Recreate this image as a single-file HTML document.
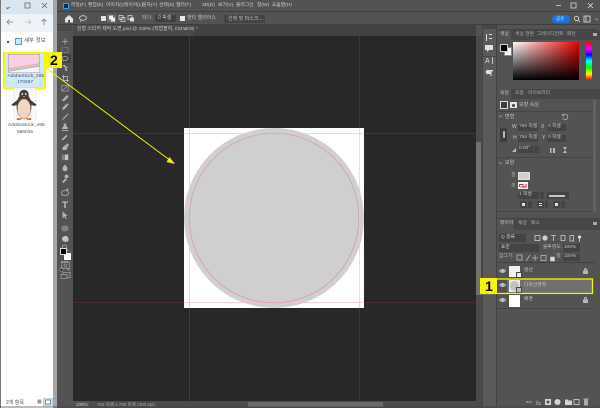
<!DOCTYPE html>
<html lang="ko"><head><meta charset="utf-8"><title>Photoshop</title>
<style>
html,body{margin:0;padding:0;background:#9a9a9a}
#w{position:relative;width:600px;height:408px;overflow:hidden;background:#a6a6a6;font-family:"Liberation Sans","Noto Sans CJK KR",sans-serif;filter:blur(.3px)}
#w div,#w span,#w svg{position:absolute}
#w span{white-space:nowrap;line-height:1}
.m{font-size:4.800px;color:#d0d0d0;top:4px}
.t{font-size:5px;color:#c6c6c6}
.d{font-size:5px;color:#c0c0c0}
.b{background:#444}
.e{font-size:5px;color:#4a5560}
</style></head><body><div id="w">

<!-- Explorer -->
<div style="left:0;top:0;width:53px;height:408px;background:#fff"></div>
<div style="left:0;top:0;width:53px;height:14px;background:#d9e5ef"></div>
<div style="left:0;top:14px;width:53px;height:18px;background:#eef3f8"></div>
<div style="left:0;top:0;width:1px;height:408px;background:#777"></div>
<svg style="left:0;top:0" width="53" height="32" viewBox="0 0 53 32" fill="none" stroke="#667" stroke-width=".8">
<path d="M7 9l3-2M7 9v-2"/><rect x="25" y="3" width="5" height="5"/><path d="M42 3l5 5M47 3l-5 5"/>
<path d="M7 22h6M7 22l2.500-2.500M7 22l2.500 2.500" stroke="#778"/><path d="M25 22h6M31 22l-2.500-2.500M31 22l-2.500 2.500" stroke="#bbb"/><path d="M44 25v-6M44 19l-2.500 2.500M44 19l2.500 2.500" stroke="#778"/>
</svg>
<div style="left:7px;top:41px;width:1.500px;height:1.500px;background:#555"></div>
<svg style="left:15px;top:38px" width="7" height="7"><rect x=".5" y=".5" width="6" height="6" fill="#cfe6f7" stroke="#2e86c8" stroke-width=".8"/></svg>
<span class="e" style="left:24px;top:39px;font-size:5.500px">세부 정보</span>

<div style="left:3px;top:52px;width:39px;height:33px;background:#cde7fb;border:2px solid #f7f500"></div>
<svg style="left:8px;top:54px" width="32" height="19" viewBox="0 0 32 19">
<rect x=".3" y=".3" width="31.400" height="18.400" fill="#f8cfe3" stroke="#999" stroke-width=".5"/>
<path d="M.5 18.500V17.500L31.500 12.500V18.500Z" fill="#fdf1f6"/>
<path d="M.5 14.200L31.500 9.200V10.200L.5 15.200Z" fill="#f29ab8"/>
<path d="M.5 15.200L31.500 10.200V11L.5 16Z" fill="#f5e06a"/>
<path d="M.5 16L31.500 11V11.800L.5 16.800Z" fill="#89cfa0"/>
<path d="M.5 16.800L31.500 11.800V12.600L.5 17.600Z" fill="#8fc3ec"/>
</svg>
<span class="e" style="left:7.500px;top:74.500px;font-size:4.800px">AdobeStock_285</span>
<span class="e" style="left:17px;top:81px;font-size:4.800px">170487</span>

<svg style="left:9px;top:88px" width="30" height="34" viewBox="0 0 30 34">
<rect x="5" y="0" width="22" height="32" fill="#fbfbfb" stroke="#ddd" stroke-width=".4"/>
<path d="M2 17C6 14 8 12 10 11L9 16 5 18ZM28 17C24 14 22 12 20 11L21 16 25 18Z" fill="#4a3d38"/>
<ellipse cx="15" cy="18" rx="7.500" ry="12.500" fill="#4a3d38"/>
<ellipse cx="15" cy="20.500" rx="6.500" ry="9.500" fill="#f3d5c4"/>
<circle cx="15" cy="6.500" r="4.800" fill="#4a3d38"/>
<circle cx="13.200" cy="6" r=".9" fill="#fff"/><circle cx="16.800" cy="6" r=".9" fill="#fff"/>
<path d="M13.800 8h2.400l-1.200 1.500z" fill="#e8853a"/>
<path d="M8 30h5l-1.500 2H7.500ZM17 30h5l.5 2H18.500Z" fill="#e8742e"/>
</svg>
<span class="e" style="left:8px;top:124px;font-size:4.800px">AdobeStock_495</span>
<span class="e" style="left:17px;top:130.500px;font-size:4.800px">586035</span>

<span class="e" style="left:6px;top:401px;font-size:5px">2개 항목</span>
<svg style="left:36px;top:398px" width="17" height="10"><rect x="1.500" y="1.500" width="4" height="4" fill="#9a9a9a"/><rect x="7.500" y="0" width="9" height="8" fill="#cfe6f7" stroke="#7fb6dc" stroke-width=".6"/><rect x="9.500" y="2" width="5" height="4" fill="#fff" stroke="#444" stroke-width=".6"/></svg>

<!-- PS frame -->
<div style="left:57px;top:0;width:543px;height:408px;background:#535353"></div>
<div style="left:57px;top:11px;width:543px;height:1px;background:#3f3f3f"></div>
<div style="left:57px;top:24px;width:543px;height:1px;background:#3e3e3e"></div>
<div style="left:63px;top:3px;width:6px;height:6px;background:#0c2b47;border:.5px solid #3aa0ea;box-sizing:border-box"></div>
<span class="m" style="left:71px">파일(F)</span><span class="m" style="left:88px">편집(E)</span><span class="m" style="left:106px">이미지(I)</span><span class="m" style="left:124px">레이어(L)</span><span class="m" style="left:142px">문자(Y)</span><span class="m" style="left:159px">선택(S)</span><span class="m" style="left:176px">필터(T)</span><span class="m" style="left:202px">3D(D)</span><span class="m" style="left:218px">보기(V)</span><span class="m" style="left:236px">플러그인</span><span class="m" style="left:257px">창(W)</span><span class="m" style="left:272px">도움말(H)</span>
<svg style="left:550px;top:0" width="50" height="11" fill="none" stroke="#d8d8d8" stroke-width=".8"><path d="M6 5.500h5"/><rect x="21" y="3" width="5" height="5"/><path d="M38 3l5 5M43 3l-5 5"/></svg>

<!-- options bar -->
<svg style="left:64px;top:13px" width="112" height="11" viewBox="0 0 112 11">
<path d="M1 5.500L5 2l4 3.500V9.500H6V7H4v2.500H1Z" fill="#e6e6e6"/>
<ellipse cx="19" cy="5" rx="3.500" ry="2.300" fill="none" stroke="#cfcfcf" stroke-width=".8"/><path d="M17 7l-.5 2" stroke="#cfcfcf" stroke-width=".7"/>
<path d="M13 1v9M33 1v9" stroke="#444" stroke-width=".6"/>
<rect x="37" y="3" width="5" height="5" fill="#e2e2e2"/>
<rect x="43" y="1.200" width="9" height="8.500" fill="#6a6a6a" rx=".5"/><rect x="45" y="2.500" width="4" height="4" fill="#eee"/><rect x="47" y="4.500" width="4" height="4" fill="#eee"/>
<rect x="55" y="2.500" width="4" height="4" fill="none" stroke="#ddd" stroke-width=".7"/><rect x="57" y="4.500" width="4" height="4" fill="none" stroke="#ddd" stroke-width=".7"/>
<rect x="64" y="2.500" width="4" height="4" fill="none" stroke="#ddd" stroke-width=".7"/><rect x="66" y="4.500" width="4" height="4" fill="#ddd"/>
</svg>
<span class="d" style="left:142px;top:16px;color:#aaa">페더:</span>
<div class="b" style="left:155px;top:15px;width:21px;height:7px;background:#3f3f3f"></div>
<span class="d" style="left:158px;top:16px">0 픽셀</span>
<div style="left:180px;top:16px;width:5px;height:5px;background:#e8e8e8"></div>
<span class="d" style="left:187px;top:16px">앤티 앨리어스</span>
<div style="left:224px;top:15px;width:41px;height:8px;background:#444"></div>
<span class="d" style="left:228px;top:16.500px">선택 및 마스크...</span>
<div style="left:552px;top:15px;width:18px;height:8px;border-radius:4px;background:#1b73e0"></div>
<span class="d" style="left:556px;top:16.500px;color:#e8f0ff;font-size:4.500px">공유</span>
<svg style="left:573px;top:14px" width="27" height="10" fill="none" stroke="#dcdcdc" stroke-width=".8"><circle cx="3.500" cy="4.500" r="2.200"/><path d="M5 6l2 2"/><rect x="11" y="2" width="6" height="6"/><path d="M13 2v6"/><path d="M22 4.500l1.500 1.500 1.500-1.500" stroke="#999"/></svg>

<!-- tabs -->
<div style="left:73px;top:25px;width:403px;height:11px;background:#424242"></div>
<div style="left:73px;top:25px;width:120px;height:11px;background:#4a4a4a"></div>
<span class="t" style="left:77px;top:28px;font-size:4.900px">원형 스티커 제작 도면.psd @ 100% (직접펼쳐, CMYK/8) *</span>
<span class="t" style="left:184px;top:28px">×</span>

<!-- toolbar -->
<div style="left:57px;top:25px;width:16px;height:383px;background:#535353"></div>
<div style="left:58px;top:25px;width:14px;height:6px;background:#4a4a4a"></div>
<div style="left:60px;top:54px;width:11px;height:9px;background:#424242"></div>
<svg style="left:57px;top:36px;opacity:.82" width="16" height="250" viewBox="0 0 16 250" fill="#c9c9c9" stroke="none">
<path d="M8 2.500v6M5 5.500h6" stroke="#c9c9c9" stroke-width=".8"/>
<rect x="5" y="11.500" width="6" height="5" fill="none" stroke="#c9c9c9" stroke-width=".6" stroke-dasharray="1.200 .8"/>
<ellipse cx="8" cy="22.500" rx="3" ry="2" fill="none" stroke="#c9c9c9" stroke-width=".7"/><path d="M6.300 24.300l-.5 1.200" stroke="#c9c9c9" stroke-width=".6"/>
<path d="M5.500 29.500l3 2.500-.7 1.500 1.700 1.700.8-.8-.8-2.500 1.500-.8-2.500-.8-.8-1.500Z"/>
<path d="M6.500 39v5.500h5.500M5 40.500h5.500V46" fill="none" stroke="#d5d5d5" stroke-width=".8"/>
<rect x="4.800" y="49.500" width="6.400" height="5.500" fill="none" stroke="#bbb" stroke-width=".7"/><path d="M5.500 54.500l5-4.500" stroke="#bbb" stroke-width=".6"/>
<path d="M5 65l.8-1.700 3.200-3.300 1.700 1.700-3.300 3.200Z"/><circle cx="10" cy="60.500" r="1.300"/>
<path d="M5 74l.8-2.500 3.200-3.300 1.700 1.700-3.300 3.300Z"/><path d="M9.300 68l1.200-.8 1.200 1.200-.8 1.200Z"/>
<path d="M5 84l.8-1.500 4.800-4.800.8.8-4.800 4.800Z"/>
<path d="M6.800 87.500h2.400v2.500l1.700 1.700v1.300H5.100v-1.300l1.700-1.700Z"/><rect x="4.800" y="94" width="6.400" height=".9"/>
<path d="M4.500 104.500l.8-1.700 4-4 1.200 1.200-4 4Z"/>
<path d="M5 112.500l2.500-3.200 3.200 2.400-1.700 2.300H6Z"/><rect x="9" y="107.500" width="2.400" height="3.200" transform="rotate(35 10 109)"/>
<rect x="4.800" y="118.500" width="6.400" height="5.600" fill="#8a8a8a"/><rect x="8" y="118.500" width="3.200" height="5.600" fill="#e0e0e0"/>
<path d="M8 128.500c1.700 1.700 2.500 3 2.500 4.300a2.500 2.500 0 1 1-5 0c0-1.300.8-2.600 2.500-4.300Z"/>
<path d="M5 145.500l1.300-.8 2-2.500 1.700 1.700-2.500 2-.8 1.300Z"/><circle cx="9.500" cy="140.500" r="1.900"/>
<path d="M4.500 157c0-1.700 1.600-2.800 3.500-2.800s3.500 1.100 3.500 2.800-1.600 2.500-3.500 2.500-3.500-.8-3.500-2.500Z" fill="none" stroke="#c9c9c9" stroke-width=".8"/><circle cx="10.500" cy="153.500" r="1"/>
<path d="M5 165.500h6v1.200H8.800V172H7.200v-5.300H5Z"/>
<path d="M5.500 175.500l5 4.200-2 .4 1.200 2.500-1.100.4-1.200-2.500-1.900 1.800Z"/>
<rect x="4.800" y="190" width="6.400" height="5" rx="2.200" fill="#888" stroke="#aaa" stroke-width=".5"/>
<path d="M5 203c0-1.700 1.700-3 3.400-3s3 .8 3 2.500v2c0 .9-1.300 1.300-3 1.300-2.100 0-3.400-1.600-3.400-2.800Z" fill="#e0e0e0"/>
<circle cx="7.500" cy="211" r="2.100" fill="none" stroke="#c9c9c9" stroke-width=".8"/><path d="M9 212.700l2.200 2.200" stroke="#c9c9c9" stroke-width=".9"/>
<path d="M4 225.500h8" stroke="#d0d0d0" stroke-width=".8" stroke-dasharray="2 .6"/>
<rect x="3" y="232" width="3" height="3" fill="#111" stroke="#ddd" stroke-width=".5"/>
<path d="M10 232.500l2.500 2M10 232.500h2" stroke="#ccc" stroke-width=".8" fill="none"/>
</svg>
<div style="left:64px;top:253px;width:7px;height:7px;background:#fff"></div>
<div style="left:60px;top:248px;width:7px;height:7px;background:#000;border:.5px solid #ddd;box-sizing:border-box"></div>
<svg style="left:60px;top:262px" width="12" height="20" fill="none" stroke="#9c9c9c" stroke-width=".8"><rect x="1.500" y=".5" width="8" height="6"/><circle cx="5.500" cy="3.500" r="1.500"/><rect x="3" y="10.500" width="7" height="5"/><rect x="1" y="12.500" width="6" height="4" fill="#535353"/></svg>

<!-- Canvas -->
<div style="left:73px;top:36px;width:403px;height:365px;background:#282828"></div>
<div style="left:189px;top:36px;width:1px;height:365px;background:#443838"></div>
<div style="left:359px;top:36px;width:1px;height:365px;background:#552c2e"></div>
<div style="left:73px;top:133px;width:403px;height:1px;background:#483233"></div>
<div style="left:73px;top:302px;width:403px;height:1px;background:#502a2c"></div>
<svg style="left:184px;top:128px" width="180" height="180" viewBox="0 0 180 180">
<rect width="180" height="180" fill="#fff"/>
<circle cx="90" cy="90" r="90" fill="#cfcfcf"/>
<path d="M5.500 0V180M175.500 0V180M0 5.500H180M0 174.500H180" stroke="#f4c2cd" stroke-width=".7"/>
<circle cx="90" cy="90" r="84.800" fill="none" stroke="#dc93ac" stroke-width=".7"/>
</svg>

<!-- status -->
<div style="left:73px;top:401px;width:403px;height:7px;background:#4c4c4c"></div>
<div style="left:73px;top:401px;width:16px;height:7px;background:#555"></div>
<span class="t" style="left:76px;top:402.500px;font-size:4.500px">100%</span>
<span class="t" style="left:97px;top:402.500px;font-size:4.500px;color:#a8a8a8">756 픽셀 x 756 픽셀 (300 ppi)</span>
<div style="left:248px;top:401.500px;width:135px;height:5px;background:#6a6a6a"></div>
<!-- v scrollbar -->
<div style="left:476px;top:36px;width:7px;height:372px;background:#4a4a4a"></div>
<div style="left:476px;top:142px;width:5px;height:153px;background:#707070"></div>

<!-- Panel columns -->
<div style="left:482px;top:25px;width:15px;height:381px;background:#5a5a5a"></div>
<div style="left:482px;top:25px;width:1px;height:381px;background:#444"></div>
<div style="left:496px;top:25px;width:1px;height:381px;background:#424242"></div>
<div style="left:483px;top:25px;width:13px;height:4px;background:#474747"></div>
<div style="left:483px;top:56px;width:13px;height:1px;background:#474747"></div>
<svg style="left:484px;top:33px" width="11" height="44" fill="#e0e0e0"><path d="M2 1h1v7H2zM5 1h3v1H5zM5 5h3v1H5z"/><path d="M1 12h8v5H5l-2 2v-2H1z"/><text x="1" y="30" font-size="7" font-family="Liberation Sans" fill="#ddd">A</text><path d="M8 24h.8v7H8zM3 37h6v1.200H7.500V43H6.500V41H5a2 2 0 0 1-2-4z"/></svg>

<!-- Color panel -->
<div style="left:497px;top:29px;width:99px;height:1px;background:#424242"></div>
<div style="left:497px;top:30px;width:103px;height:10px;background:#474747"></div>
<div style="left:497px;top:30px;width:14px;height:10px;background:#535353"></div>
<span class="t" style="left:500px;top:32.500px;font-size:4.800px">색상</span>
<span class="t" style="left:515px;top:32.500px;font-size:4.800px;color:#aaa">색상 견본</span>
<span class="t" style="left:537px;top:32.500px;font-size:4.800px;color:#aaa">그레이디언트</span>
<span class="t" style="left:567px;top:32.500px;font-size:4.800px;color:#aaa">패턴</span>
<div style="left:593px;top:33px;width:4px;height:3px;background:#aaa"></div>
<div style="left:504px;top:47px;width:6px;height:7px;background:#fff;border:.5px solid #888"></div>
<div style="left:500px;top:44px;width:6px;height:6px;background:#000;border:.5px solid #ccc"></div>
<div style="left:513px;top:42px;width:66px;height:38px;background:linear-gradient(to top,#000,rgba(0,0,0,0)),linear-gradient(to right,#fff,#e60000)"></div>
<div style="left:586px;top:42px;width:6px;height:38px;background:linear-gradient(to bottom,#f00,#f0f 17%,#00f 33%,#0ff 50%,#0f0 67%,#ff0 83%,#f00)"></div>

<!-- Properties -->
<div style="left:497px;top:89px;width:103px;height:10px;background:#474747"></div>
<div style="left:497px;top:89px;width:14px;height:10px;background:#535353"></div>
<span class="t" style="left:500px;top:91.500px;font-size:4.800px">속성</span>
<span class="t" style="left:515px;top:91.500px;font-size:4.800px;color:#aaa">조정</span>
<span class="t" style="left:528px;top:91.500px;font-size:4.800px;color:#aaa">라이브러리</span>
<div style="left:500px;top:101px;width:8px;height:8px;border:.8px solid #ddd;box-sizing:border-box;background:#3e3e3e"></div>
<div style="left:510px;top:102px;width:7px;height:6px;background:#e6e6e6"></div>
<div style="left:512px;top:103.500px;width:3px;height:3px;border-radius:50%;background:#444"></div>
<span class="t" style="left:519px;top:103px">모양 속성</span>
<div style="left:497px;top:111px;width:99px;height:1px;background:#454545"></div>
<span class="t" style="left:505px;top:114.500px">변형</span>
<svg style="left:498px;top:114px" width="5" height="5" fill="none" stroke="#aaa" stroke-width=".6"><path d="M1 1.500l1.500 1.500L4 1.500"/></svg>
<svg style="left:561px;top:113px" width="8" height="8" fill="none" stroke="#bbb" stroke-width=".7"><path d="M2 2a2.800 2.800 0 1 1-.5 3M1.500 1v2h2"/></svg>
<div style="left:500px;top:128px;width:7px;height:14px;background:#3d3d3d"></div>
<div style="left:502.500px;top:131px;width:2px;height:7px;border:.6px solid #bbb;border-radius:1px;box-sizing:border-box"></div>
<span class="t" style="left:512px;top:125px">W</span><span class="t" style="left:541px;top:125px">X</span>
<span class="t" style="left:513px;top:136px">H</span><span class="t" style="left:542px;top:136px">Y</span>
<div class="b" style="left:518px;top:124px;width:20px;height:7px"></div><div class="b" style="left:547px;top:124px;width:19px;height:7px"></div>
<div class="b" style="left:518px;top:135px;width:20px;height:7px"></div><div class="b" style="left:547px;top:135px;width:19px;height:7px"></div>
<span class="d" style="left:519px;top:125px;font-size:4.800px">756 픽셀</span><span class="d" style="left:548px;top:125px;font-size:4.800px">0 픽셀</span>
<span class="d" style="left:519px;top:136px;font-size:4.800px">756 픽셀</span><span class="d" style="left:548px;top:136px;font-size:4.800px">0 픽셀</span>
<div class="b" style="left:518px;top:146px;width:15px;height:7px"></div><div class="b" style="left:534px;top:146px;width:5px;height:7px"></div>
<span class="d" style="left:519px;top:147px;font-size:4.800px">0.00°</span>
<svg style="left:511px;top:146px" width="60" height="8" fill="#bbb"><path d="M1 6l4-4v4z"/><rect x="39" y="2" width="1.500" height="5"/><rect x="42" y="2" width="2" height="5"/><path d="M52 1h4l-2 3zM52 7h4l-2-3z"/></svg>
<div style="left:497px;top:157px;width:99px;height:1px;background:#454545"></div>
<span class="t" style="left:505px;top:161px">모양</span>
<svg style="left:498px;top:161px" width="5" height="5" fill="none" stroke="#aaa" stroke-width=".6"><path d="M1 1.500l1.500 1.500L4 1.500"/></svg>
<span class="t" style="left:511px;top:173px;color:#aaa">칠</span><span class="t" style="left:511px;top:183.500px;color:#aaa">획</span>
<div style="left:518px;top:172px;width:10px;height:6px;background:#cfcfcf;border:.5px solid #e2e2e2"></div>
<div style="left:518px;top:182px;width:10px;height:7px;background:#f3f3f3"></div>
<svg style="left:519px;top:183px" width="8" height="5" fill="none" stroke-width="1"><path d="M.5 4V1.500H4V4h3V1" stroke="#d23"/><path d="M1 4h5" stroke="#333" stroke-width=".5"/></svg>
<div class="b" style="left:518px;top:192px;width:21px;height:7px"></div><div class="b" style="left:540px;top:192px;width:4px;height:7px"></div>
<span class="d" style="left:519px;top:193px;font-size:4.800px">1 픽셀</span>
<div style="left:547px;top:192px;width:22px;height:7px;background:#444"></div>
<div style="left:548.500px;top:195px;width:16px;height:1.500px;background:#c6c6c6"></div>
<div class="b" style="left:520px;top:201px;width:7px;height:7px"></div><div class="b" style="left:528px;top:201px;width:4px;height:7px"></div>
<div class="b" style="left:537px;top:201px;width:7px;height:7px"></div><div class="b" style="left:545px;top:201px;width:3px;height:7px"></div>
<div class="b" style="left:553px;top:201px;width:7px;height:7px"></div><div class="b" style="left:561px;top:201px;width:4px;height:7px"></div>
<div style="left:522px;top:203px;width:3px;height:3px;background:#ddd"></div><div style="left:539px;top:202.500px;width:3px;height:1px;background:#ddd"></div><div style="left:539px;top:205px;width:3px;height:1px;background:#ddd"></div><div style="left:555px;top:203px;width:3px;height:3px;background:#ddd"></div>
<div style="left:497px;top:211px;width:99px;height:1px;background:#454545"></div>
<div style="left:593px;top:100px;width:3px;height:112px;background:#636363"></div>

<!-- Layers -->
<div style="left:497px;top:218px;width:103px;height:1px;background:#424242"></div>
<div style="left:497px;top:219px;width:103px;height:11px;background:#474747"></div>
<div style="left:497px;top:219px;width:17px;height:11px;background:#535353"></div>
<span class="t" style="left:500px;top:222px;font-size:4.800px">레이어</span>
<span class="t" style="left:518px;top:222px;font-size:4.800px;color:#aaa">채널</span>
<span class="t" style="left:531px;top:222px;font-size:4.800px;color:#aaa">패스</span>
<div style="left:593px;top:222px;width:4px;height:3px;background:#aaa"></div>
<div class="b" style="left:499px;top:234px;width:27px;height:8px"></div>
<span class="d" style="left:501px;top:235.500px;font-size:4.800px">Q 종류</span>
<svg style="left:534px;top:234px" width="50" height="8" fill="none" stroke="#cfcfcf" stroke-width=".8"><rect x="1" y="1.500" width="5" height="5"/><circle cx="11" cy="4" r="2.200" fill="#cfcfcf"/><path d="M17 1.500h5M19.500 1.500v5.500M27 1.500h4v5h-4zM36 1.500h3.500v5.500H36z"/><circle cx="45.500" cy="3" r="1.500" fill="#eee" stroke="none"/><path d="M45.500 4.500v3" stroke="#eee"/></svg>
<div class="b" style="left:499px;top:244px;width:40px;height:8px"></div>
<span class="d" style="left:501px;top:245.500px;font-size:4.800px">표준</span>
<span class="d" style="left:543px;top:245.500px;font-size:4.800px;color:#bbb">불투명도:</span>
<div class="b" style="left:563px;top:244px;width:17px;height:8px"></div>
<span class="d" style="left:564px;top:245.500px;font-size:4.800px">100%</span>
<span class="d" style="left:499px;top:255px;font-size:4.800px;color:#bbb">잠그기:</span>
<svg style="left:516px;top:254px" width="40" height="8" fill="none" stroke="#bbb" stroke-width=".8"><rect x="1" y="1" width="5" height="5"/><path d="M10 7l4-6M19 1v6M16 4h6" /><rect x="25" y="1.500" width="5" height="5"/><rect x="34.500" y="3" width="4" height="4" fill="#ddd"/></svg>
<span class="d" style="left:556px;top:255px;font-size:4.800px;color:#bbb">칠:</span>
<div class="b" style="left:563px;top:254px;width:17px;height:7px"></div>
<span class="d" style="left:564px;top:255px;font-size:4.800px">100%</span>
<div style="left:497px;top:262px;width:99px;height:1px;background:#424242"></div>

<div style="left:498px;top:279px;width:95px;height:15px;background:#707070"></div>
<div style="left:497px;top:279px;width:10px;height:15px;background:#535353"></div>
<div style="left:497px;top:294px;width:96px;height:1px;background:#444"></div>
<div style="left:497px;top:308px;width:96px;height:1px;background:#474747"></div>

<svg style="left:499px;top:268px" width="8" height="40" fill="none" stroke="#d4d4d4" stroke-width=".7"><path d="M.7 3C2 1 5 1 6.500 3 5 5 2 5 .7 3z"/><circle cx="3.600" cy="3" r=".9" fill="#d4d4d4"/><path d="M.7 17C2 15 5 15 6.500 17 5 19 2 19 .7 17z"/><circle cx="3.600" cy="17" r=".9" fill="#d4d4d4"/><path d="M.7 32C2 30 5 30 6.500 32 5 34 2 34 .7 32z"/><circle cx="3.600" cy="32" r=".9" fill="#d4d4d4"/></svg>

<div style="left:509px;top:266px;width:11px;height:11px;background:repeating-conic-gradient(#e4e4e4 0 25%,#fff 0 50%) 0 0/3px 3px"></div>
<div style="left:516px;top:272px;width:6px;height:6px;background:#eee;border:.6px solid #444;box-sizing:border-box"></div>
<div style="left:509px;top:280px;width:11px;height:12px;background:#e8e8e8"></div>
<div style="left:510px;top:281px;width:9px;height:10px;background:#c2c2c2;border-radius:50%"></div>
<div style="left:516px;top:287px;width:6px;height:6px;background:#bbb;border:.6px solid #444;box-sizing:border-box"></div>
<div style="left:509px;top:295px;width:11px;height:12px;background:#fff"></div>

<span class="t" style="left:524px;top:269px;font-size:4.800px">칼선</span>
<span class="t" style="left:524px;top:284px;font-size:4.800px">디자인영역</span>
<span class="t" style="left:524px;top:298px;font-size:4.800px">배경</span>
<svg style="left:582px;top:267px" width="7" height="40" fill="#b8b8b8"><path d="M2 2.500a1.500 1.500 0 0 1 3 0V3.500H6V7H1V3.500H2zM3 3.500h1V2.500H3z"/><path transform="translate(0 29)" d="M2 2.500a1.500 1.500 0 0 1 3 0V3.500H6V7H1V3.500H2zM3 3.500h1V2.500H3z"/></svg>

<svg style="left:524px;top:397px" width="68" height="10" fill="#d5d5d5"><path d="M2 5h6" stroke="#888" stroke-width="2" stroke-dasharray="2 .6"/><text x="12" y="8" font-size="6" font-family="Liberation Serif" fill="#ccc">fx</text><rect x="21" y="2" width="6" height="6"/><circle cx="24" cy="5" r="1.500" fill="#535353"/><circle cx="33.500" cy="5" r="3"/><path d="M41 2.500h2.500l1 1H48V8h-7z"/><rect x="50" y="2.500" width="5" height="5" fill="none" stroke="#d5d5d5" stroke-width=".8"/><rect x="60" y="2.500" width="4" height="6" fill="#aaa"/><rect x="59.500" y="1.500" width="5" height="1" fill="#aaa"/></svg>

<div style="left:0;top:406px;width:600px;height:2px;background:#3e3e3e;opacity:.35"></div>

<!-- annotations -->
<svg style="left:0;top:0" width="600" height="408" viewBox="0 0 600 408">
<path d="M46 68L169 159.500" stroke="#f2f000" stroke-width="1"/>
<path d="M175 164l-8.500-2 3-5z" fill="#f2f000"/>
<rect x="481" y="279" width="111.500" height="14.500" fill="none" stroke="#f7f500" stroke-width="1.300"/>
</svg>
<div style="left:46px;top:52px;width:16px;height:16px;background:#f7f500"></div>
<span style="left:50px;top:53px;font-size:14px;font-weight:bold;color:#000">2</span>
<div style="left:480px;top:278px;width:17px;height:16px;background:#f7f500"></div>
<span style="left:485px;top:279px;font-size:14px;font-weight:bold;color:#000">1</span>
</div></body></html>
